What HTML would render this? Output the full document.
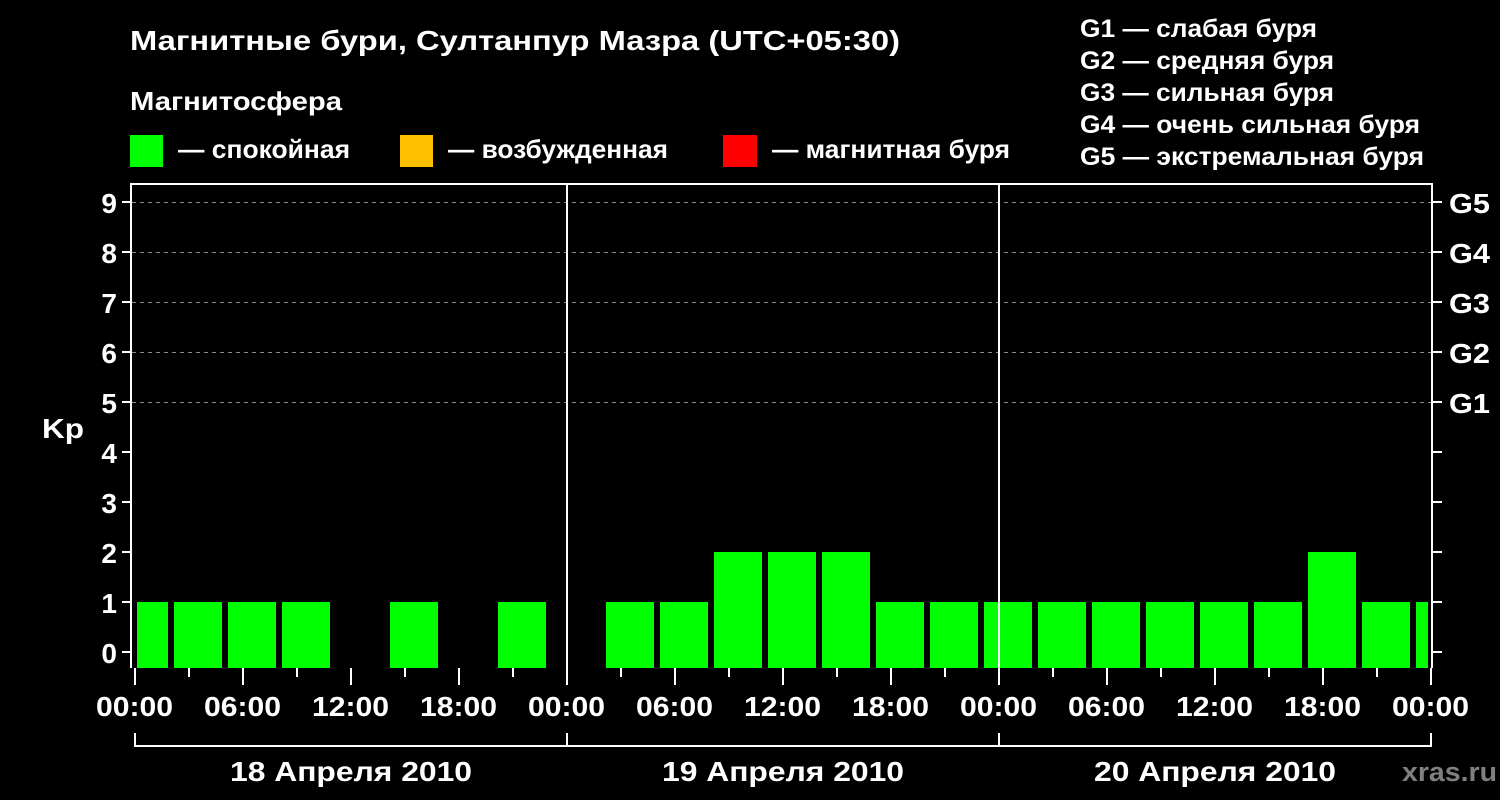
<!DOCTYPE html>
<html><head><meta charset="utf-8"><style>html,body{margin:0;padding:0;background:#000;}svg{display:block}</style></head>
<body>
<svg width="1500" height="800" xmlns="http://www.w3.org/2000/svg" font-family="Liberation Sans, DejaVu Sans, sans-serif" font-weight="bold" fill="#fff">
<rect width="1500" height="800" fill="#000"/>
<text x="130" y="50" font-size="28" textLength="770" lengthAdjust="spacingAndGlyphs">Магнитные бури, Султанпур Мазра (UTC+05:30)</text>
<text x="130" y="110" font-size="26" textLength="212" lengthAdjust="spacingAndGlyphs">Магнитосфера</text>
<rect x="130" y="135" width="33" height="32" fill="#00ff00"/>
<text x="178" y="158" font-size="26" textLength="172" lengthAdjust="spacingAndGlyphs">— спокойная</text>
<rect x="400" y="135" width="33" height="32" fill="#ffc000"/>
<text x="448" y="158" font-size="26" textLength="220" lengthAdjust="spacingAndGlyphs">— возбужденная</text>
<rect x="723" y="135" width="34" height="32" fill="#ff0000"/>
<text x="772" y="158" font-size="26" textLength="238" lengthAdjust="spacingAndGlyphs">— магнитная буря</text>
<g font-size="25" lengthAdjust="spacingAndGlyphs">
<text x="1080" y="37" textLength="237" lengthAdjust="spacingAndGlyphs">G1 — слабая буря</text>
<text x="1080" y="69" textLength="254" lengthAdjust="spacingAndGlyphs">G2 — средняя буря</text>
<text x="1080" y="101" textLength="254" lengthAdjust="spacingAndGlyphs">G3 — сильная буря</text>
<text x="1080" y="133" textLength="340" lengthAdjust="spacingAndGlyphs">G4 — очень сильная буря</text>
<text x="1080" y="165" textLength="344" lengthAdjust="spacingAndGlyphs">G5 — экстремальная буря</text>
</g>
<g stroke="#888" stroke-width="1" stroke-dasharray="4,4">
<line x1="132" y1="202.5" x2="1431" y2="202.5"/>
<line x1="132" y1="252.5" x2="1431" y2="252.5"/>
<line x1="132" y1="302.5" x2="1431" y2="302.5"/>
<line x1="132" y1="352.5" x2="1431" y2="352.5"/>
<line x1="132" y1="402.5" x2="1431" y2="402.5"/>
</g>
<defs><clipPath id="c"><rect x="137" y="184" width="1291" height="484"/></clipPath></defs>
<g fill="#00ff00" clip-path="url(#c)">
<rect x="120" y="602" width="48" height="66"/>
<rect x="174" y="602" width="48" height="66"/>
<rect x="228" y="602" width="48" height="66"/>
<rect x="282" y="602" width="48" height="66"/>
<rect x="390" y="602" width="48" height="66"/>
<rect x="498" y="602" width="48" height="66"/>
<rect x="606" y="602" width="48" height="66"/>
<rect x="660" y="602" width="48" height="66"/>
<rect x="714" y="552" width="48" height="116"/>
<rect x="768" y="552" width="48" height="116"/>
<rect x="822" y="552" width="48" height="116"/>
<rect x="876" y="602" width="48" height="66"/>
<rect x="930" y="602" width="48" height="66"/>
<rect x="984" y="602" width="48" height="66"/>
<rect x="1038" y="602" width="48" height="66"/>
<rect x="1092" y="602" width="48" height="66"/>
<rect x="1146" y="602" width="48" height="66"/>
<rect x="1200" y="602" width="48" height="66"/>
<rect x="1254" y="602" width="48" height="66"/>
<rect x="1308" y="552" width="48" height="116"/>
<rect x="1362" y="602" width="48" height="66"/>
<rect x="1416" y="602" width="48" height="66"/>
</g>
<g stroke="#fff" stroke-width="2" fill="none">
<path d="M131 668 V184 H1432 V668"/>
<line x1="567" y1="184" x2="567" y2="668"/>
<line x1="999" y1="184" x2="999" y2="668"/>
<path d="M122 202H131M122 252H131M122 302H131M122 352H131M122 402H131M122 452H131M122 502H131M122 552H131M122 602H131M122 652H131"/>
<path d="M1432 202H1442M1432 252H1442M1432 302H1442M1432 352H1442M1432 402H1442M1432 452H1442M1432 502H1442M1432 552H1442M1432 602H1442M1432 652H1442"/>
<path d="M135 668V685M243 668V685M351 668V685M459 668V685M567 668V685M675 668V685M783 668V685M891 668V685M999 668V685M1107 668V685M1215 668V685M1323 668V685M1431 668V685"/>
<path d="M189 668V677M297 668V677M405 668V677M513 668V677M621 668V677M729 668V677M837 668V677M945 668V677M1053 668V677M1161 668V677M1269 668V677M1377 668V677"/>
<path d="M135 733V746H1431V733M567 733V746M999 733V746"/>
</g>
<g font-size="28" text-anchor="end">
<text x="117" y="213">9</text><text x="117" y="263">8</text><text x="117" y="313">7</text><text x="117" y="363">6</text><text x="117" y="413">5</text><text x="117" y="463">4</text><text x="117" y="513">3</text><text x="117" y="563">2</text><text x="117" y="613">1</text><text x="117" y="663">0</text>
</g>
<text x="42" y="438" font-size="28" textLength="42" lengthAdjust="spacingAndGlyphs">Kp</text>
<g font-size="28">
<text x="1449" y="213" textLength="41" lengthAdjust="spacingAndGlyphs">G5</text><text x="1449" y="263" textLength="41" lengthAdjust="spacingAndGlyphs">G4</text><text x="1449" y="313" textLength="41" lengthAdjust="spacingAndGlyphs">G3</text><text x="1449" y="363" textLength="41" lengthAdjust="spacingAndGlyphs">G2</text><text x="1449" y="413" textLength="41" lengthAdjust="spacingAndGlyphs">G1</text>
</g>
<g font-size="28">
<text x="96" y="716" textLength="77" lengthAdjust="spacingAndGlyphs">00:00</text><text x="204" y="716" textLength="77" lengthAdjust="spacingAndGlyphs">06:00</text><text x="312" y="716" textLength="77" lengthAdjust="spacingAndGlyphs">12:00</text><text x="420" y="716" textLength="77" lengthAdjust="spacingAndGlyphs">18:00</text>
<text x="528" y="716" textLength="77" lengthAdjust="spacingAndGlyphs">00:00</text><text x="636" y="716" textLength="77" lengthAdjust="spacingAndGlyphs">06:00</text><text x="744" y="716" textLength="77" lengthAdjust="spacingAndGlyphs">12:00</text><text x="852" y="716" textLength="77" lengthAdjust="spacingAndGlyphs">18:00</text>
<text x="960" y="716" textLength="77" lengthAdjust="spacingAndGlyphs">00:00</text><text x="1068" y="716" textLength="77" lengthAdjust="spacingAndGlyphs">06:00</text><text x="1176" y="716" textLength="77" lengthAdjust="spacingAndGlyphs">12:00</text><text x="1284" y="716" textLength="77" lengthAdjust="spacingAndGlyphs">18:00</text><text x="1392" y="716" textLength="77" lengthAdjust="spacingAndGlyphs">00:00</text>
<text x="230" y="781" textLength="242" lengthAdjust="spacingAndGlyphs">18 Апреля 2010</text>
<text x="662" y="781" textLength="242" lengthAdjust="spacingAndGlyphs">19 Апреля 2010</text>
<text x="1094" y="781" textLength="242" lengthAdjust="spacingAndGlyphs">20 Апреля 2010</text>
</g>
<text x="1402" y="781" font-size="27" fill="#808080" textLength="95" lengthAdjust="spacingAndGlyphs">xras.ru</text>
</svg>
</body></html>
